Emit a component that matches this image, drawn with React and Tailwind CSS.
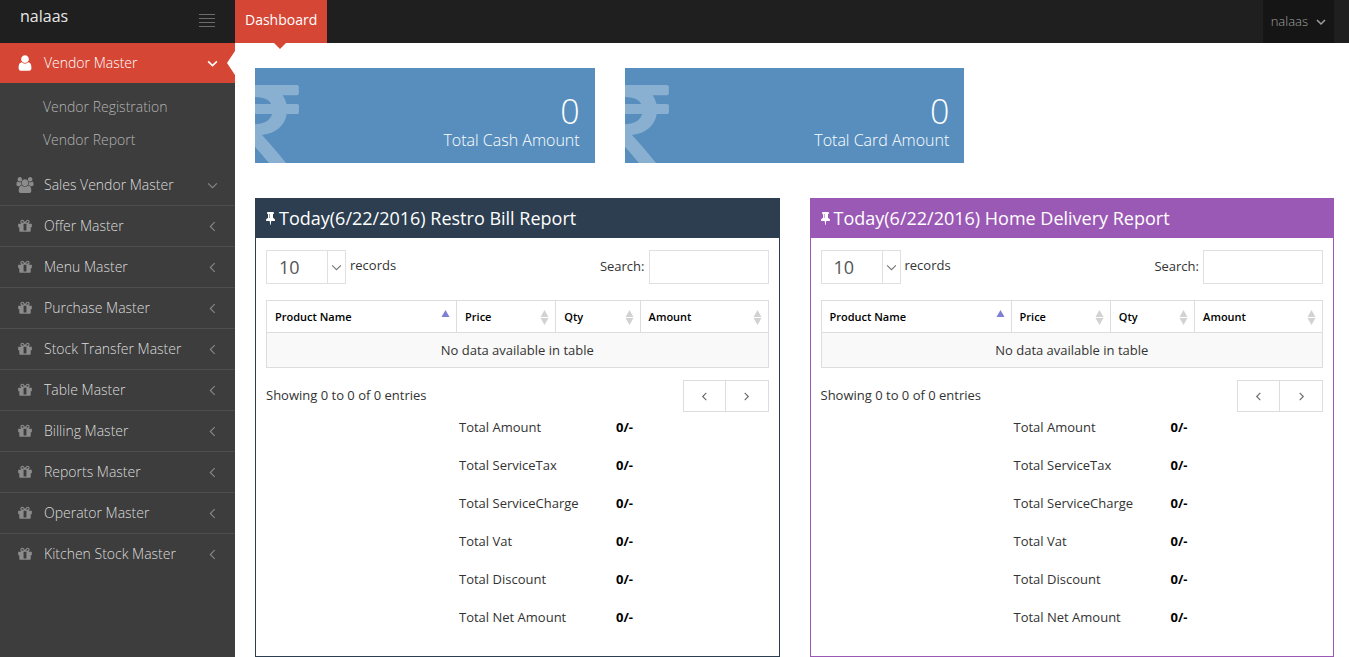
import React, { useState } from 'react';
import clsx from 'clsx';

const ICONS = {
    user: {
        box: '0 0 1792 1792',
        d: 'M1536 1399q0 109-62.5 187t-150.5 78h-854q-88 0-150.5-78t-62.5-187q0-85 8.5-160.5t31.5-152 58.5-131 94-89 134.5-34.5q131 128 313 128t313-128q76 0 134.5 34.5t94 89 58.5 131 31.5 152 8.5 160.5zm-256-887q0 159-112.5 271.5t-271.5 112.5-271.5-112.5-112.5-271.5 112.5-271.5 271.5-112.5 271.5 112.5 112.5 271.5z',
    },
    group: {
        box: '0 0 1920 1792',
        d: 'M593 896q-162 5-265 128h-134q-82 0-138-40.5t-56-118.5q0-353 124-353 6 0 43.5 21t97.5 42.5 119 21.5q67 0 133-23-5 37-5 66 0 139 81 256zm1071 637q0 120-73 189.5t-194 69.5h-874q-121 0-194-69.5t-73-189.5q0-53 3.5-103.5t14-109 26.5-108.5 43-97.5 62-81 85.5-53.5 111.5-20q10 0 43 21.5t73 48 107 48 135 21.5 135-21.5 107-48 73-48 43-21.5q61 0 111.5 20t85.5 53.5 62 81 43 97.5 26.5 108.5 14 109 3.5 103.5zm-1024-1277q0 106-75 181t-181 75-181-75-75-181 75-181 181-75 181 75 75 181zm704 384q0 159-112.5 271.5t-271.5 112.5-271.5-112.5-112.5-271.5 112.5-271.5 271.5-112.5 271.5 112.5 112.5 271.5zm576 225q0 78-56 118.5t-138 40.5h-134q-103-123-265-128 81-117 81-256 0-29-5-66 66 23 133 23 59 0 119-21.5t97.5-42.5 43.5-21q124 0 124 353zm-128-609q0 106-75 181t-181 75-181-75-75-181 75-181 181-75 181 75 75 181z',
    },
    gift: {
        box: '0 0 1792 1792',
        d: 'M1056 1356v-716h-320v716q0 25 18 38.5t46 13.5h192q28 0 46-13.5t18-38.5zm-456-844h195l-126-161q-26-31-69-31-40 0-68 28t-28 68 28 68 68 28zm688-96q0-40-28-68t-68-28q-43 0-69 31l-125 161h194q40 0 68-28t28-68zm376 256v320q0 14-9 23t-23 9h-96v416q0 40-28 68t-68 28h-1088q-40 0-68-28t-28-68v-416h-96q-14 0-23-9t-9-23v-320q0-14 9-23t23-9h440q-93 0-158.5-65.5t-65.5-158.5 65.5-158.5 158.5-65.5q107 0 168 77l128 165 128-165q61-77 168-77 93 0 158.5 65.5t65.5 158.5-65.5 158.5-158.5 65.5h440q14 0 23 9t9 23z',
    },
    pin: {
        box: '320 128 1152 1664',
        d: 'M800 864v-448q0-14-9-23t-23-9-23 9-9 23v448q0 14 9 23t23 9 23-9 9-23zm672 352q0 26-19 45t-45 19h-429l-51 483q-2 12-10.5 20.5t-20.5 8.500h-1q-27 0-32-27l-76-485h-404q-26 0-45-19t-19-45q0-123 78.5-221.5t177.5-98.5v-512q-52 0-90-38t-38-90 38-90 90-38h640q52 0 90 38t38 90-38 90-90 38v512q99 0 177.5 98.5t78.5 221.5z',
    },
    rupee: {
        box: '0 128 898 1408',
        d: 'M898 470v102q0 14-9 23t-23 9h-168q-23 144-129 234t-276 110q167 178 459 536 14 16 4 34-8 18-29 18h-195q-16 0-25-12-306-367-498-571-9-9-9-22v-127q0-13 9.5-22.5t22.5-9.5h112q132 0 212.5-43t102.5-125h-427q-14 0-23-9t-9-23v-102q0-14 9-23t23-9h413q-57-113-268-113h-145q-13 0-22.5-9.5t-9.5-22.5v-133q0-14 9-23t23-9h832q14 0 23 9t9 23v102q0 14-9 23t-23 9h-233q47 61 64 144h171q14 0 23 9t9 23z',
    },
};

const CHEVRONS = {
    down: 'M1 3l4 4 4-4',
    left: 'M7 1L3 5l4 4',
    right: 'M3 1l4 4-4 4',
};

const Icon = ({ name, className }) => (
    <svg viewBox={ICONS[name].box} className={className} fill="currentColor" aria-hidden="true">
        <path d={ICONS[name].d} />
    </svg>
);

const Chevron = ({ dir, className, width = 1 }) => (
    <svg viewBox="0 0 10 10" className={className} fill="none" stroke="currentColor" strokeWidth={width} aria-hidden="true">
        <path d={CHEVRONS[dir]} />
    </svg>
);

const menu = [
    { label: 'Sales Vendor Master', icon: 'group', dir: 'down' },
    { label: 'Offer Master', icon: 'gift', dir: 'left' },
    { label: 'Menu Master', icon: 'gift', dir: 'left' },
    { label: 'Purchase Master', icon: 'gift', dir: 'left' },
    { label: 'Stock Transfer Master', icon: 'gift', dir: 'left' },
    { label: 'Table Master', icon: 'gift', dir: 'left' },
    { label: 'Billing Master', icon: 'gift', dir: 'left' },
    { label: 'Reports Master', icon: 'gift', dir: 'left' },
    { label: 'Operator Master', icon: 'gift', dir: 'left' },
    { label: 'Kitchen Stock Master', icon: 'gift', dir: 'left' },
];

const columns = [
    { label: 'Product Name', width: 'w-[37.9%]', sorted: true },
    { label: 'Price', width: 'w-[19.8%]' },
    { label: 'Qty', width: 'w-[16.8%]' },
    { label: 'Amount', width: 'w-[25.5%]' },
];

const totals = ['Total Amount', 'Total ServiceTax', 'Total ServiceCharge', 'Total Vat', 'Total Discount', 'Total Net Amount'];

const Header = () => (
    <header className="flex h-[43px] bg-[#1f1f1f]">
        <div className="flex w-[235px] shrink-0 justify-between pl-5 pr-5">
            <a href="#" className="pt-1 text-base text-[#e6e6e6]">nalaas</a>
            <button type="button" aria-label="Toggle menu" className="flex flex-col justify-center gap-[3px] pb-0.5">
                <span className="h-px w-4 bg-[#6b6b6b]" />
                <span className="h-px w-4 bg-[#6b6b6b]" />
                <span className="h-px w-4 bg-[#6b6b6b]" />
                <span className="h-px w-4 bg-[#6b6b6b]" />
            </button>
        </div>
        <nav>
            <a href="#" className="relative block h-full bg-[#d64635] px-[10px] pt-[10px] text-sm text-white">
                Dashboard
                <svg viewBox="0 0 12 6" className="absolute top-full left-[39px] h-[6px] w-3 text-[#d64635]" fill="currentColor" aria-hidden="true">
                    <path d="M0 0h12L6 6z" />
                </svg>
            </a>
        </nav>
        <button type="button" className="mr-[15px] ml-auto flex items-center gap-2 bg-[#151515] px-2 text-[13px] font-light text-[#a0a0a0]">
            nalaas
            <Chevron dir="down" className="h-[10px] w-[10px]" width={1.5} />
        </button>
    </header>
);

const Sidebar = () => (
    <aside className="w-[235px] shrink-0 bg-[#3d3d3d] text-sm font-light">
        <a href="#" className="relative flex h-10 items-center bg-[#d64635] pl-4 text-white">
            <Icon name="user" className="mr-[10px] h-[18px] w-[18px]" />
            Vendor Master
            <Chevron dir="down" className="mr-[17px] ml-auto h-[11px] w-[11px]" width={1.5} />
            <svg viewBox="0 0 8 24" className="absolute top-2 right-0 h-6 w-2 text-white" fill="currentColor" aria-hidden="true">
                <path d="M8 0v24L0 12z" />
            </svg>
        </a>
        <ul className="pt-[7px] pb-[9px] text-[#b4b4b4]">
            {['Vendor Registration', 'Vendor Report'].map((label) => (
                <li key={label}><a href="#" className="block py-[6px] pl-[43px] leading-[21px]">{label}</a></li>
            ))}
        </ul>
        <ul className="text-[#dcdcdc]">
            {menu.map((item, i) => (
                <li key={item.label} className={clsx(i > 0 && 'border-t border-[#4e4e4e]')}>
                    <a href="#" className="flex h-10 items-center pl-4">
                        <Icon name={item.icon} className="mr-[10px] h-4 w-[18px] text-[#8c8c8c]" />
                        {item.label}
                        <Chevron dir={item.dir} className="mr-[17px] ml-auto h-[11px] w-[11px] text-[#888]" />
                    </a>
                </li>
            ))}
        </ul>
    </aside>
);

const StatCard = ({ label }) => (
    <div className="relative h-[95px] overflow-hidden bg-[#578ebe] pr-[15px] text-right font-light text-white">
        <Icon name="rupee" className="absolute top-[17px] left-[-11px] h-[86px] w-[55px] opacity-30" />
        <div className="pt-[25px] text-[34px] leading-[36px]">0</div>
        <div className="text-base leading-[22px]">{label}</div>
    </div>
);

const SortIcon = ({ sorted }) => (
    <svg viewBox="0 0 9 15" className={clsx('h-[15px] w-[9px] shrink-0', sorted ? 'text-[#7f7fd5]' : 'text-[#d2d2d2]')} fill="currentColor" aria-hidden="true">
        <path d={sorted ? 'M0.500 7L4.500 0 8.500 7z' : 'M0.500 7L4.500 0 8.500 7zM0.500 8h8L4.500 15z'} />
    </svg>
);

const ReportPanel = ({ id, title, frame, head }) => {
    const [search, setSearch] = useState('');

    return (
        <section className={clsx('border pb-4', frame)}>
            <h2 className={clsx('flex h-[39px] items-center gap-1 px-[10px] pb-0.5 text-lg text-white', head)}>
                <Icon name="pin" className="mt-0.5 h-[13px] w-[9px]" />
                {title}
            </h2>
            <div className="px-[10px] pt-3 text-[13px] text-[#333]">
                <div className="flex justify-between">
                    <div className="flex items-center gap-1">
                        <div className="relative">
                            <select id={`${id}-length`} className="h-[34px] w-20 appearance-none border border-[#e0e0e0] bg-white pl-3 text-lg text-[#555]">
                                <option>10</option>
                            </select>
                            <span className="pointer-events-none absolute top-0 right-0 flex h-full w-[19px] items-center justify-center border-x border-[#e0e0e0] text-[#777]">
                                <Chevron dir="down" className="h-[11px] w-[11px] shrink-0" />
                            </span>
                        </div>
                        <label htmlFor={`${id}-length`} className="pb-0.5">records</label>
                    </div>
                    <label className="flex items-center gap-1">
                        Search:
                        <input type="text" value={search} onChange={(e) => setSearch(e.target.value)} className="h-[34px] w-[120px] border border-[#e0e0e0] px-3 outline-none" />
                    </label>
                </div>
                <table className="mt-4 w-full table-fixed border-collapse border border-[#ddd]">
                    <thead>
                        <tr className="h-8">
                            {columns.map((col) => (
                                <th key={col.label} className={clsx('border border-[#ddd] pt-0.5 pr-[6px] pl-2 text-left text-[11px] font-semibold text-black', col.width)}>
                                    <div className="flex items-center justify-between">
                                        {col.label}
                                        <SortIcon sorted={col.sorted} />
                                    </div>
                                </th>
                            ))}
                        </tr>
                    </thead>
                    <tbody>
                        <tr className="h-[35px] bg-[#f9f9f9]">
                            <td colSpan={4} className="pt-0.5 text-center">No data available in table</td>
                        </tr>
                    </tbody>
                </table>
                <div className="mt-3 flex justify-between">
                    <span className="pt-[6px]">Showing 0 to 0 of 0 entries</span>
                    <div className="flex h-8 divide-x divide-[#ddd] border border-[#ddd] text-[#666]">
                        <button type="button" aria-label="Previous" className="flex w-[42px] items-center justify-center"><Chevron dir="left" className="h-[9px] w-[9px]" width={1.2} /></button>
                        <button type="button" aria-label="Next" className="flex w-[42px] items-center justify-center"><Chevron dir="right" className="h-[9px] w-[9px]" width={1.2} /></button>
                    </div>
                </div>
                <dl className="ml-[193px]">
                    {totals.map((label) => (
                        <div key={label} className="flex h-[38px] items-start pt-[6px]">
                            <dt className="w-[157px]">{label}</dt>
                            <dd className="font-bold text-black">0/-</dd>
                        </div>
                    ))}
                </dl>
            </div>
        </section>
    );
};

const App = () => (
    <div className="flex min-h-screen flex-col bg-white font-['Open_Sans',sans-serif]">
        <Header />
        <div className="flex flex-1">
            <Sidebar />
            <main className="min-w-0 flex-1 pt-[25px] pr-[15px] pl-5">
                <div className="grid grid-cols-3 gap-[30px]">
                    <StatCard label="Total Cash Amount" />
                    <StatCard label="Total Card Amount" />
                </div>
                <div className="mt-[35px] grid grid-cols-2 gap-[30px]">
                    <ReportPanel id="restro" title="Today(6/22/2016) Restro Bill Report" frame="border-[#2c3e50]" head="bg-[#2c3e50]" />
                    <ReportPanel id="delivery" title="Today(6/22/2016) Home Delivery Report" frame="border-[#9b59b6]" head="bg-[#9b59b6]" />
                </div>
            </main>
        </div>
    </div>
);

export default App;
